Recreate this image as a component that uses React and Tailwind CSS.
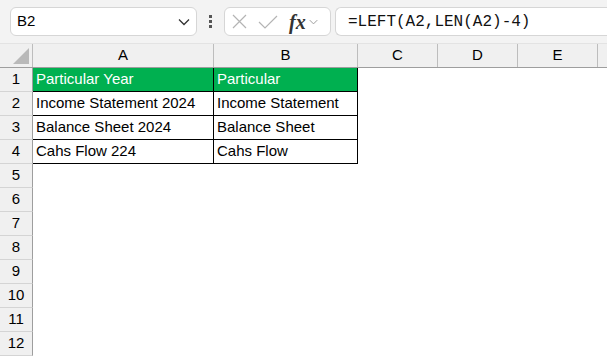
import React from 'react';

const cols = [
  { name: 'A', w: 'w-[181px]' },
  { name: 'B', w: 'w-[144px]' },
  { name: 'C', w: 'w-[80px]' },
  { name: 'D', w: 'w-[80px]' },
  { name: 'E', w: 'w-[80px]' },
  { name: '', w: 'w-[80px]' },
];

const data = [
  ['Particular Year', 'Particular'],
  ['Income Statement 2024', 'Income Statement'],
  ['Balance Sheet 2024', 'Balance Sheet'],
  ['Cahs Flow 224', 'Cahs Flow'],
];

function Chevron({ className }) {
  return (
    <svg className={className} width="12" height="8" viewBox="0 0 12 8" fill="none">
      <path d="M1 1.5 L6 6.5 L11 1.5" stroke="currentColor" strokeWidth="1.3" />
    </svg>
  );
}

export default function App() {
  return (
    <div className="w-[607px] h-[363px] overflow-hidden bg-white font-['Liberation_Sans',sans-serif] text-[15px] text-black">
      {/* formula bar area */}
      <div className="h-[44px] bg-[#f3f3f3] flex items-center pl-[10px] border-b border-[#e3e3e3]">
        <div className="w-[187px] h-[29px] bg-white rounded-[6px] border border-[#d6d6d6] flex items-center justify-between pl-[6px] pr-[6px]">
          <span className="text-[15px]">B2</span>
          <Chevron className="text-[#333]" />
        </div>
        <div className="w-[27px] flex flex-col items-center gap-[2px]">
          <span className="w-[3px] h-[3px] bg-[#555]" />
          <span className="w-[3px] h-[3px] bg-[#555]" />
          <span className="w-[3px] h-[3px] bg-[#555]" />
        </div>
        <div className="w-[107px] h-[29px] bg-white rounded-[6px] border border-[#d6d6d6] flex items-center pl-[7px]">
          <svg width="15" height="15" viewBox="0 0 15 15" fill="none">
            <path d="M1 1 L14 14 M14 1 L1 14" stroke="#b4b4b4" strokeWidth="1.2" />
          </svg>
          <svg className="ml-[11px]" width="20" height="14" viewBox="0 0 20 14" fill="none">
            <path d="M1 7 L7 13 L19 1" stroke="#b4b4b4" strokeWidth="1.2" />
          </svg>
          <span className="ml-[11px] font-['Liberation_Serif',serif] italic font-bold text-[20px] text-[#333] leading-none">fx</span>
          <Chevron className="ml-[3px] text-[#9a9a9a] w-[9px]" />
        </div>
        <div className="ml-[4px] flex-1 h-[29px] bg-white rounded-l-[6px] border border-r-0 border-[#d6d6d6] flex items-center pl-[12px]">
          <span className="font-['Liberation_Mono',monospace] text-[16px] text-[#111]">=LEFT(A2,LEN(A2)-4)</span>
        </div>
      </div>

      {/* column headers */}
      <div className="flex h-[24px] bg-[#f0f0f0] border-b border-[#9e9e9e]">
        <div className="w-[33px] shrink-0 relative border-r border-[#bdbdbd]">
          <div className="absolute right-[3px] bottom-[3px] w-0 h-0 border-l-[16px] border-l-transparent border-b-[16px] border-b-[#b9b9b9]" />
        </div>
        {cols.map((c, i) => (
          <div key={i} className={`${c.w} shrink-0 flex items-center justify-center border-r border-[#bdbdbd] text-[15px]`}>
            {c.name}
          </div>
        ))}
      </div>

      {/* rows */}
      {Array.from({ length: 12 }).map((_, i) => {
        const row = data[i];
        return (
          <div key={i} className="flex h-[24px]">
            <div className="w-[33px] shrink-0 bg-[#f0f0f0] border-r border-[#9e9e9e] border-b border-b-[#d4d4d4] flex items-center justify-center text-[15px]">
              {i + 1}
            </div>
            {row ? (
              <>
                <div className={`w-[181px] shrink-0 flex items-center pl-[3px] border-r border-b border-black ${i === 0 ? 'bg-[#00b050] text-white' : ''}`}>
                  {row[0]}
                </div>
                <div className={`w-[144px] shrink-0 flex items-center pl-[3px] border-r border-b border-black ${i === 0 ? 'bg-[#00b050] text-white' : ''}`}>
                  {row[1]}
                </div>
              </>
            ) : null}
          </div>
        );
      })}
    </div>
  );
}
